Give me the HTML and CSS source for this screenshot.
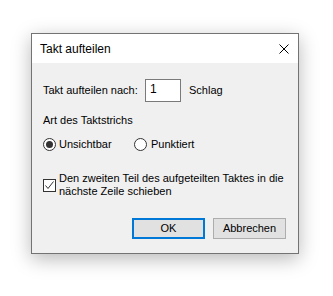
FILE: index.html
```html
<!DOCTYPE html>
<html lang="de">
<head>
<meta charset="utf-8">
<title>Takt aufteilen</title>
<link rel="stylesheet" href="styles.css">
</head>
<body>
<div class="dialog">
  <div class="titlebar">
    <span class="title">Takt aufteilen</span>
    <svg class="close" width="10" height="10" viewBox="0 0 10 10"><path d="M0.5 0.5 L9.5 9.5 M9.5 0.5 L0.5 9.5" stroke="#000" stroke-width="1" fill="none"/></svg>
  </div>
  <div class="content">
    <div class="split-row">
      <span class="split-label">Takt aufteilen nach:</span>
      <span class="field">1</span>
      <span class="unit">Schlag</span>
    </div>
    <div class="group-label">Art des Taktstrichs</div>
    <div class="radios">
      <div class="option first"><span class="radio checked"></span><span class="opt-label">Unsichtbar</span></div>
      <div class="option"><span class="radio"></span><span class="opt-label">Punktiert</span></div>
    </div>
    <div class="check-row">
      <span class="checkbox"><svg width="11" height="11" viewBox="0 0 11 11"><path d="M1.5 5.5 L4 8.5 L9.5 1.5" stroke="#333" stroke-width="1" fill="none"/></svg></span>
      <span class="check-label">Den zweiten Teil des aufgeteilten Taktes in die<br>nächste Zeile schieben</span>
    </div>
    <div class="buttons">
      <span class="btn default">OK</span>
      <span class="btn">Abbrechen</span>
    </div>
  </div>
</div>
</body>
</html>
```

FILE: styles.css
```css
html, body {
  margin: 0;
  padding: 0;
  background: #ffffff;
}
body {
  width: 333px;
  height: 296px;
  overflow: hidden;
  font-family: "Liberation Sans", Arial, sans-serif;
  font-size: 11px;
  color: #000;
}
.dialog {
  box-sizing: border-box;
  width: 268px;
  height: 221px;
  margin: 33px 0 0 31px;
  border: 1px solid #737373;
  background: #f0f0f0;
  box-shadow: 0 5px 18px rgba(0, 0, 0, 0.28);
  display: flex;
  flex-direction: column;
}
.titlebar {
  height: 29px;
  background: #ffffff;
  display: flex;
  align-items: center;
  justify-content: space-between;
  padding: 0 9px 0 8px;
}
.title {
  font-size: 12px;
  line-height: 14px;
}
.close {
  display: block;
}
.content {
  flex: 1;
  display: flex;
  flex-direction: column;
  padding: 0 12px 0 11px;
  line-height: 13px;
}
.split-row {
  margin-top: 16px;
  height: 23px;
  display: flex;
  align-items: center;
}
.split-label {
  width: 102px;
}
.field {
  box-sizing: border-box;
  width: 36px;
  height: 23px;
  border: 1px solid #7a7a7a;
  background: #fff;
  padding: 3px 0 0 4px;
  font-size: 12px;
}
.unit {
  margin-left: 8px;
}
.group-label {
  margin-top: 12px;
}
.radios {
  margin-top: 11px;
  display: flex;
  align-items: center;
  height: 13px;
}
.option {
  display: flex;
  align-items: center;
}
.option.first {
  width: 91px;
}
.radio {
  box-sizing: border-box;
  width: 13px;
  height: 13px;
  border: 1px solid #333;
  border-radius: 50%;
  background: #fff;
  display: flex;
  align-items: center;
  justify-content: center;
}
.radio.checked::after {
  content: "";
  width: 7px;
  height: 7px;
  border-radius: 50%;
  background: #333;
}
.opt-label {
  margin-left: 3px;
}
.option:not(.first) .opt-label {
  margin-left: 4px;
}
.check-row {
  margin-top: 21px;
  display: flex;
  align-items: center;
}
.checkbox {
  box-sizing: border-box;
  width: 13px;
  height: 13px;
  border: 1px solid #333;
  background: #fff;
  flex: none;
  margin-top: 1px;
}
.checkbox svg {
  display: block;
}
.check-label {
  margin-left: 3px;
  white-space: nowrap;
}
.buttons {
  margin-top: 20px;
  display: flex;
  justify-content: flex-end;
  gap: 8px;
}
.btn {
  box-sizing: border-box;
  width: 73px;
  height: 21px;
  border: 1px solid #adadad;
  background: #e1e1e1;
  display: flex;
  align-items: center;
  justify-content: center;
}
.btn.default {
  border: 2px solid #0078d7;
}
```
